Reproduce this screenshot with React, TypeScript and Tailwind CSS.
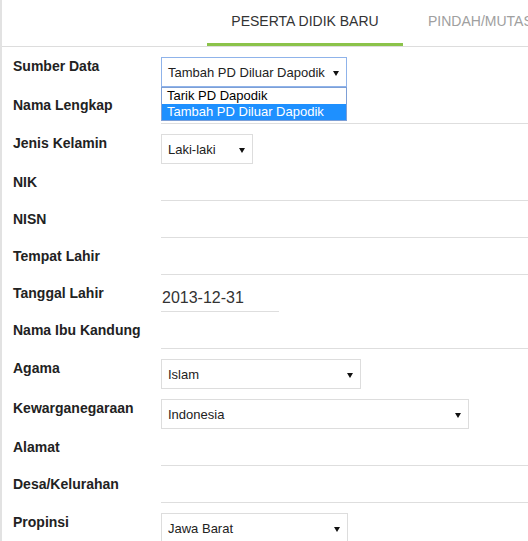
import React from 'react';

type Field =
    | { label: string; kind: 'text'; value?: string; width?: string }
    | { label: string; kind: 'select'; value: string; width: string; focused?: boolean };

const fields: Field[] = [
    { label: 'Sumber Data', kind: 'select', value: 'Tambah PD Diluar Dapodik', width: 'w-[186px]', focused: true },
    { label: 'Nama Lengkap', kind: 'text' },
    { label: 'Jenis Kelamin', kind: 'select', value: 'Laki-laki', width: 'w-[92px]' },
    { label: 'NIK', kind: 'text' },
    { label: 'NISN', kind: 'text' },
    { label: 'Tempat Lahir', kind: 'text' },
    { label: 'Tanggal Lahir', kind: 'text', value: '2013-12-31', width: 'w-[118px]' },
    { label: 'Nama Ibu Kandung', kind: 'text' },
    { label: 'Agama', kind: 'select', value: 'Islam', width: 'w-[200px]' },
    { label: 'Kewarganegaraan', kind: 'select', value: 'Indonesia', width: 'w-[308px]' },
    { label: 'Alamat', kind: 'text' },
    { label: 'Desa/Kelurahan', kind: 'text' },
    { label: 'Propinsi', kind: 'select', value: 'Jawa Barat', width: 'w-[187px]' },
];

const Arrow: React.FC = () => (
    <svg width="6" height="5" viewBox="0 0 6 5" className="shrink-0">
        <polygon points="0,0 6,0 3,5" fill="#111" />
    </svg>
);

const SelectBox: React.FC<{ value: string; width: string; focused?: boolean }> = ({ value, width, focused }) => (
    <div className="relative">
        <div
            className={`${width} h-[30px] flex items-center justify-between pl-[6px] pr-[7px] pt-[2px] text-[13px] text-[#222] bg-white border ${focused ? 'border-[#8fb3ea]' : 'border-[#dddddd]'}`}
        >
            <span className="whitespace-nowrap">{value}</span>
            <Arrow />
        </div>
        {focused && (
            <div className="absolute left-0 top-[30px] w-[186px] bg-white border border-[#7d9fd6] text-[13px] leading-[16px] z-10">
                <div className="px-[5px] text-black">Tarik PD Dapodik</div>
                <div className="px-[5px] bg-[#1e90ff] text-white">Tambah PD Diluar Dapodik</div>
            </div>
        )}
    </div>
);

const App: React.FC = () => {
    return (
        <div
            className="min-h-screen bg-white border-l-2 border-[#e2e2e2] overflow-hidden"
            style={{ fontFamily: '"Liberation Sans", Arial, sans-serif' }}
        >
            <div className="flex h-[47px] border-b border-[#dddddd] pl-[205px] whitespace-nowrap">
                <div className="w-[196px] h-[46px] shrink-0 pt-[13px] text-center text-[14px] leading-[16px] text-[#333] border-b-[3px] border-[#8bc34a]">
                    PESERTA DIDIK BARU
                </div>
                <div className="shrink-0 pl-[25px] pt-[13px] text-[14px] leading-[16px] text-[#a0a0a0]">
                    PINDAH/MUTASI
                </div>
            </div>

            <div className="pl-[11px] pt-[7px]">
                {fields.map(f => (
                    <div key={f.label} className={`flex pb-[7px] ${f.kind === 'select' ? 'pt-[3px]' : ''}`}>
                        <div
                            className={`w-[148px] shrink-0 text-[14px] leading-[16px] font-bold text-[#222] ${f.kind === 'text' ? 'pt-[3px]' : 'pt-[1px]'}`}
                        >
                            {f.label}
                        </div>
                        {f.kind === 'select' ? (
                            <SelectBox value={f.value} width={f.width} focused={f.focused} />
                        ) : (
                            <div
                                className={`${f.width ?? 'flex-1'} h-[30px] flex items-center pt-[2px] pl-[1px] border-b border-[#dedede] text-[16px] text-[#333]`}
                            >
                                {f.value}
                            </div>
                        )}
                    </div>
                ))}
            </div>
        </div>
    );
};

export default App;
